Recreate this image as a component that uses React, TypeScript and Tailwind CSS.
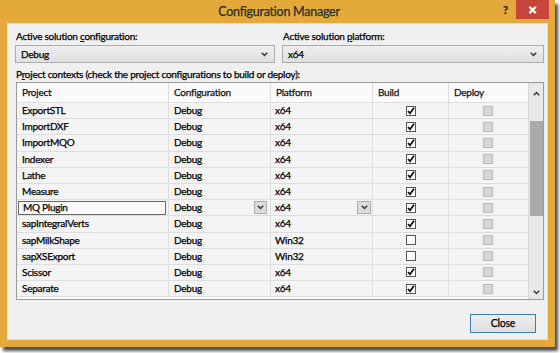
import React from "react";

const rows: { name: string; platform: string; build: boolean }[] = [
  { name: "ExportSTL", platform: "x64", build: true },
  { name: "ImportDXF", platform: "x64", build: true },
  { name: "ImportMQO", platform: "x64", build: true },
  { name: "Indexer", platform: "x64", build: true },
  { name: "Lathe", platform: "x64", build: true },
  { name: "Measure", platform: "x64", build: true },
  { name: "MQ Plugin", platform: "x64", build: true },
  { name: "sapIntegralVerts", platform: "x64", build: true },
  { name: "sapMilkShape", platform: "Win32", build: false },
  { name: "sapXSExport", platform: "Win32", build: false },
  { name: "Scissor", platform: "x64", build: true },
  { name: "Separate", platform: "x64", build: true },
];

const font = { fontFamily: 'Lato, "Open Sans", sans-serif' };

function Chevron({ className = "" }: { className?: string }) {
  return (
    <svg width="7" height="5" viewBox="0 0 7 5" className={className}>
      <path d="M0.8 0.8 L3.5 3.6 L6.2 0.8" fill="none" stroke="#333" strokeWidth="1.4" />
    </svg>
  );
}

function Check({ checked }: { checked: boolean }) {
  return (
    <div className="w-[10px] h-[10px] border border-[#555] bg-white flex items-center justify-center">
      {checked && (
        <svg width="8" height="8" viewBox="0 0 8 8">
          <path d="M1 4 L3 6.3 L7 0.8" fill="none" stroke="#111" strokeWidth="1.8" />
        </svg>
      )}
    </div>
  );
}

function Combo({ value, width }: { value: string; width: string }) {
  return (
    <div
      className={`${width} h-[18px] border border-[#acacac] bg-gradient-to-b from-[#efefef] to-[#e0e0e0] flex items-center justify-between pl-[5px] pr-[6px]`}
    >
      <span className="text-[10px] text-[#000]">{value}</span>
      <Chevron />
    </div>
  );
}

export default function App() {
  return (
    <div
      className="w-[560px] h-[353px] bg-white overflow-hidden tracking-[-0.25px] [-webkit-text-stroke:0.25px_currentColor]"
      style={font}
    >
      <div className="w-[555px] h-[347px] bg-[#e3a93b] flex flex-col shadow-[3px_4px_3px_rgba(0,0,0,0.7)]">
        {/* title bar */}
        <div className="h-[23px] flex items-start relative">
          <div className="flex-1 text-center text-[12.5px] text-[#2b2b2b] leading-[24px] pl-[3px]">
            Configuration Manager
          </div>
          <div className="absolute left-[503px] top-[2px] text-[11px] font-bold text-[#222]">?</div>
          <div className="absolute left-[516px] top-0 w-[33px] h-[19px] bg-[#c8453c] flex items-center justify-center text-white text-[11px] font-bold leading-none">
            ✕
          </div>
        </div>
        {/* body */}
        <div className="mx-[7px] h-[317px] bg-[#f0f0f0] border border-[#f4dca4] flex flex-col px-[7px] text-[#000]">
          <div className="flex gap-[7px] mt-[5px]">
            <div className="flex flex-col">
              <div className="text-[10px] leading-[15px] h-[16px] ml-[1px]">
                Active solution <span className="underline">c</span>onfiguration:
              </div>
              <Combo value="Debug" width="w-[260px]" />
            </div>
            <div className="flex flex-col">
              <div className="text-[10px] leading-[15px] h-[16px] ml-[1px]">
                Active solution <span className="underline">p</span>latform:
              </div>
              <Combo value="x64" width="w-[262px]" />
            </div>
          </div>
          <div className="text-[10px] leading-[15px] mt-[4px] ml-[1px]">
            P<span className="underline">r</span>oject contexts (check the project configurations to build or deploy):
          </div>
          {/* table */}
          <div className="ml-[1px] w-[528px] h-[218px] border border-[#9a9a9a] bg-[#fafafa] flex">
            <div className="flex flex-col w-[511px]">
              <div className="flex h-[20px] border-b border-[#dedede] text-[10px] text-[#111]">
                <div className="w-[152px] pl-[5px] flex items-center border-r border-[#dedede]">Project</div>
                <div className="w-[102px] pl-[5px] flex items-center border-r border-[#dedede]">Configuration</div>
                <div className="w-[102px] pl-[5px] flex items-center border-r border-[#dedede]">Platform</div>
                <div className="w-[76px] pl-[5px] flex items-center border-r border-[#dedede]">Build</div>
                <div className="w-[79px] pl-[5px] flex items-center">Deploy</div>
              </div>
              {rows.map((r) => {
                const focused = r.name === "MQ Plugin";
                return (
                  <div key={r.name} className="flex h-[16.2px] border-b border-[#dedede] text-[10px] text-[#000] bg-[#f4f4f4]">
                    <div className="w-[152px] flex items-center border-r border-[#dedede] relative">
                      {focused ? (
                        <div className="ml-[1px] w-[148px] h-[14px] border border-[#6a6a6a] bg-[#f8f8f8] pl-[4px] flex items-center">
                          {r.name}
                        </div>
                      ) : (
                        <span className="pl-[5px]">{r.name}</span>
                      )}
                    </div>
                    <div className="w-[102px] flex items-center justify-between border-r border-[#dedede] pl-[5px] pr-[3px]">
                      <span>Debug</span>
                      {focused && (
                        <div className="w-[13px] h-[13px] border border-[#adadad] bg-[#dcdcdc] flex items-center justify-center">
                          <Chevron />
                        </div>
                      )}
                    </div>
                    <div className="w-[102px] flex items-center justify-between border-r border-[#dedede] pl-[4px] pr-[1px]">
                      <span>{r.platform}</span>
                      {focused && (
                        <div className="w-[14px] h-[13px] border border-[#adadad] bg-[#dcdcdc] flex items-center justify-center">
                          <Chevron />
                        </div>
                      )}
                    </div>
                    <div className="w-[76px] flex items-center justify-center border-r border-[#dedede] pl-[1px]">
                      <Check checked={r.build} />
                    </div>
                    <div className="w-[79px] flex items-center justify-center pr-[1px]">
                      <div className="w-[10px] h-[10px] border border-[#bdbdbd] bg-[#d6d6d6]" />
                    </div>
                  </div>
                );
              })}
            </div>
            {/* scrollbar */}
            <div className="w-[15px] border-l border-[#d8d8d8] bg-[#e8e8e8] flex flex-col items-center">
              <div className="h-[20px] flex items-center justify-center">
                <Chevron className="rotate-180" />
              </div>
              <div className="h-[18px]" />
              <div className="w-[13px] h-[95px] bg-[#a9a9a9]" />
              <div className="flex-1" />
              <div className="h-[14px] flex items-center justify-center">
                <Chevron />
              </div>
            </div>
          </div>
          {/* footer */}
          <div className="flex justify-end mt-[14px] mr-[4px]">
            <div className="w-[66px] h-[19px] border border-[#3c7fb1] bg-gradient-to-b from-[#efefef] to-[#dedede] flex items-center justify-center text-[10.5px] text-[#000]">
              Close
            </div>
          </div>
        </div>
      </div>
    </div>
  );
}
